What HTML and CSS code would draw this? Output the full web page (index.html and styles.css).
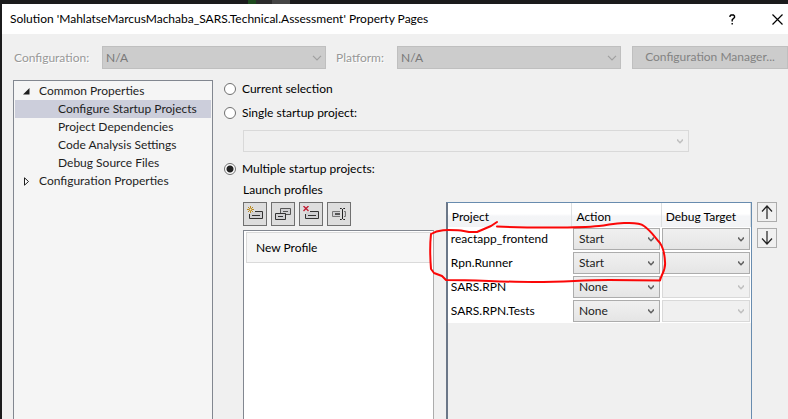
FILE: index.html
```html
<!DOCTYPE html>
<html lang="en">
<head>
<meta charset="utf-8">
<title>Property Pages</title>
<link rel="stylesheet" href="styles.css">
</head>
<body>
<svg class="defs" aria-hidden="true">
  <symbol id="chevron" viewBox="0 0 10 6"><path d="M1 .8 5 4.8 9 .8" fill="none" stroke="currentColor" stroke-width="1.2"/></symbol>
  <symbol id="caret" viewBox="0 0 6 5"><path d="M.6 .3V1.300L3 3.800 5.400 1.300V.3" fill="none" stroke="currentColor" stroke-width="1.4"/></symbol>
</svg>
<div class="dialog">
  <header class="titlebar">
    <h1>Solution 'MahlatseMarcusMachaba_SARS.Technical.Assessment' Property Pages</h1>
    <button class="caption" aria-label="Help"><svg width="7" height="11" viewBox="0 0 7 11" fill="none" stroke="#000" stroke-width="1.4"><path d="M1 3V2L2 1H4.5L5.5 2V3.5L3.2 5.8V7.5M3.2 9V10.6"/></svg></button>
    <button class="caption" aria-label="Close"><svg width="11" height="11" viewBox="0 0 11 11" stroke="#000" stroke-width="1.2"><path d="M.5.5 10.5 10.5M10.5.5.5 10.5"/></svg></button>
  </header>

  <div class="config">
    <label class="config-label" for="cfg">Configuration:</label>
    <span class="combo grey"><select id="cfg" disabled><option>N/A</option></select><svg class="chevron"><use href="#chevron"/></svg></span>
    <label class="platform-label" for="plat">Platform:</label>
    <span class="combo grey"><select id="plat" disabled><option>N/A</option></select><svg class="chevron"><use href="#chevron"/></svg></span>
    <button class="manager" disabled>Configuration Manager...</button>
  </div>

  <main class="main">
    <nav class="tree">
      <div class="node"><svg width="7" height="7" viewBox="0 0 7 7"><path d="M6.5 0V6.5H0Z" fill="#1e1e1e"/></svg>Common Properties</div>
      <div class="node child selected">Configure Startup Projects</div>
      <div class="node child">Project Dependencies</div>
      <div class="node child">Code Analysis Settings</div>
      <div class="node child">Debug Source Files</div>
      <div class="node"><svg width="7" height="9" viewBox="0 0 7 9"><path d="M1.500.8V8.2L5.5 4.5Z" fill="#fff" stroke="#1e1e1e"/></svg>Configuration Properties</div>
    </nav>

    <section class="pane">
      <label class="choice"><input type="radio" name="startup">Current selection</label>
      <label class="choice"><input type="radio" name="startup">Single startup project:</label>
      <span class="combo single"><select aria-label="Single startup project" disabled><option></option></select><svg class="caret"><use href="#caret"/></svg></span>
      <label class="choice multiple"><input type="radio" name="startup" checked>Multiple startup projects:</label>

      <div class="profiles">
        <h2>Launch profiles</h2>
        <div class="columns">
          <div class="launch">
            <div class="tools">
              <button aria-label="Add profile"><svg width="16" height="16" viewBox="0 0 16 16" fill="none"><path d="M3 6H15V12H3Z" fill="#d0d0d2"/><path d="M8 5.5H15.5V12.5H2.5V8M5 9.500H13" stroke="#333"/><path d="M3.500 0V7M0 3.500H7M1 1 6 6M6 1 1 6" stroke="#b98a22"/><circle cx="3.500" cy="3.500" r="1" fill="#f4e6c4"/></svg></button>
              <button aria-label="Duplicate profile"><svg width="16" height="16" viewBox="0 0 16 16" stroke="#333" fill="#d0d0d2"><path d="M5.5 7.500V2.5H15.5V8.5H10.500V7.500Z" stroke="#555"/><path d="M8 5.500H13" stroke="#555"/><path d="M.5 7.5H10.5V13.5H.5Z"/><path d="M3 10.5H8"/></svg></button>
              <button aria-label="Delete profile"><svg width="16" height="16" viewBox="0 0 16 16" fill="none"><path d="M3 6H15V12H3Z" fill="#d0d0d2"/><path d="M7 5.5H15.5V12.5H2.5V8M5 9.500H13" stroke="#333"/><path d="M.5 0 5.5 5M5.5 0 .5 5" stroke="#c01f35" stroke-width="1.4"/></svg></button>
              <button aria-label="Rename profile"><svg width="16" height="16" viewBox="0 0 16 16" fill="none"><path d="M9 5.5H1.5V10.5H9M13 5.5H14.5V10.5H13" stroke="#777" fill="#d0d0d2"/><path d="M4 8H9" stroke="#555" stroke-width="2"/><path d="M9 2.5H10.5L11.5 3.5 12.5 2.5H14M9 13.5H10.5L11.5 12.5 12.5 13.5H14M11.5 3V13" stroke="#222"/></svg></button>
            </div>
            <ul class="list"><li>New Profile</li></ul>
          </div>

          <div class="projects">
            <table>
              <thead><tr><th class="name">Project</th><th>Action</th><th>Debug Target</th></tr></thead>
              <tbody>
                <tr><td>reactapp_frontend</td>
                  <td><span class="combo"><select aria-label="Action"><option>Start</option></select><svg class="caret"><use href="#caret"/></svg></span></td>
                  <td><span class="combo"><select aria-label="Debug target"><option></option></select><svg class="caret"><use href="#caret"/></svg></span></td></tr>
                <tr><td>Rpn.Runner</td>
                  <td><span class="combo"><select aria-label="Action"><option>Start</option></select><svg class="caret"><use href="#caret"/></svg></span></td>
                  <td><span class="combo"><select aria-label="Debug target"><option></option></select><svg class="caret"><use href="#caret"/></svg></span></td></tr>
                <tr><td>SARS.RPN</td>
                  <td><span class="combo"><select aria-label="Action"><option>None</option></select><svg class="caret"><use href="#caret"/></svg></span></td>
                  <td><span class="combo"><select aria-label="Debug target" disabled><option></option></select><svg class="caret"><use href="#caret"/></svg></span></td></tr>
                <tr><td>SARS.RPN.Tests</td>
                  <td><span class="combo"><select aria-label="Action"><option>None</option></select><svg class="caret"><use href="#caret"/></svg></span></td>
                  <td><span class="combo"><select aria-label="Debug target" disabled><option></option></select><svg class="caret"><use href="#caret"/></svg></span></td></tr>
              </tbody>
            </table>
            <svg class="marker" width="246" height="70" viewBox="425 217 246 70" fill="none" stroke="#fb0707" stroke-width="2" stroke-linecap="round" stroke-linejoin="round"><path d="M498 222L492 226 485 229 478 232H470L462 230.500C450 230 440 229 432 234C431 243 431 256 432 269L435 273L443 276L447 280C480 280 500 282 535 282C570 282 580 280 610 280L661 280.500C662 275 667 270 666 262C665.500 250 663 246 661 243C654 235 652 231 645 226C640 222 631 223 625 223C615 223 610 225 600 226C580 228 530 228 498 226.500"/></svg>
          </div>

          <div class="order">
            <button aria-label="Move up"><svg width="12" height="14" viewBox="0 0 12 14" fill="none" stroke="#222" stroke-width="1.2"><path d="M6 1V14M1 6.500 6 1 11 6.500"/></svg></button>
            <button aria-label="Move down"><svg width="12" height="14" viewBox="0 0 12 14" fill="none" stroke="#222" stroke-width="1.2"><path d="M6 0V13M1 7.500 6 13 11 7.500"/></svg></button>
          </div>
        </div>
      </div>
    </section>
  </main>
</div>
</body>
</html>
```
FILE: styles.css
```css
* { box-sizing: border-box; }

body {
  margin: 0;
  height: 100vh;
  overflow: hidden;
  padding: 4px 0 0 2px;
  background: linear-gradient(90deg, #1b1b1c 248px, #1e4a1e 248px 256px, #2b2b2b 256px 272px, #454545 272px 290px, #1b1b1c 290px);
  font: 12px/18px Lato, "Open Sans", sans-serif;
  color: #1e1e1e;
}

button, select, input { margin: 0; font: inherit; color: inherit; }
button { display: flex; align-items: center; justify-content: center; padding: 0; }
h1, h2, ul { margin: 0; padding: 0; font: inherit; }
.defs { display: none; }

.dialog { height: 100%; display: flex; flex-direction: column; background: #f0f0f0; }

.titlebar { display: flex; align-items: center; height: 30px; flex: none; padding-left: 8px; background: #fff; color: #000; }
.titlebar h1 { flex: 1; white-space: nowrap; }
.caption { width: 45px; height: 28px; border: 0; background: none; }
.caption + .caption { margin-right: -12px; }

.config { display: flex; align-items: center; flex: none; padding: 12px 0 11px 12px; color: #989898; text-shadow: 1px 1px #fff; }
.config-label { width: 88px; }
.platform-label { width: 61px; margin-left: 10px; }
.config .combo { flex: 1; }
.manager { width: 156px; height: 23px; margin: -1px 0 0 11px; border: 1px solid #bfbfbf; background: #ccc; color: #838383; white-space: nowrap; text-shadow: none; }

/* A select and its arrow share one grid cell */
.combo { display: grid; align-items: center; color: #222; text-shadow: none; }
.combo select, .combo svg { grid-area: 1 / 1; }
.combo select {
  width: 100%;
  height: 22px;
  padding: 0 5px;
  appearance: none;
  border: 1px solid #acacac;
  border-radius: 0;
  background: linear-gradient(#f0f0f0, #e5e5e5);
  opacity: 1;
}
.combo svg { justify-self: end; pointer-events: none; }
.caret { width: 6px; height: 5px; margin-right: 6px; color: #606060; }
.chevron { width: 10px; height: 6px; margin-right: 4px; color: #a0a0a0; }
.combo.grey select { height: 23px; padding: 0 3px; color: #787878; }
.combo select:disabled { border-color: #d9d9d9; background: #f0f0f0; }
.combo.grey select:disabled { border-color: #bfbfbf; background: #ccc; }
.combo select:disabled + .caret { color: #bfbfbf; }

.main { flex: 1; min-height: 0; display: grid; grid-template-columns: 200px minmax(0, 1fr); gap: 11px; padding: 0 11px; }

.tree { padding: 1px; border: 1px solid #828790; border-bottom: 0; background: #f5f5f5; white-space: nowrap; }
.node { display: flex; align-items: center; height: 18px; padding-left: 8px; gap: 9px; }
.child { padding-left: 43px; }
.selected { background: #cccedb; }

.pane { min-width: 0; display: flex; flex-direction: column; color: #000; }
.choice { display: flex; align-items: center; gap: 6px; height: 18px; flex: none; }
.choice + .choice { margin-top: 6px; }
.choice input { width: 12px; height: 12px; appearance: none; border: 1px solid #707070; border-radius: 50%; background: #fff; }
.choice input:checked { background: radial-gradient(circle, #212121 3px, #fff 4px); }
.single { margin: 8px 88px 0 19px; }
.multiple { margin-top: 8px; }

.profiles { flex: 1; min-height: 0; display: flex; flex-direction: column; padding-left: 19px; }
.profiles h2 { height: 24px; padding-top: 3px; }
.columns { flex: 1; min-height: 0; display: flex; }
.launch { flex: 192; min-width: 0; display: flex; flex-direction: column; margin-right: 12px; }
.tools { display: flex; gap: 4px; }
.tools button { width: 24px; height: 24px; border: 1px solid #707070; background: #ddd; }
.list { flex: 1; margin-top: 4px; padding: 1px 2px; border: 1px solid #828790; border-right-color: #acacac; border-bottom: 0; background: #fff; list-style: none; }
.list li { display: flex; align-items: center; height: 31px; padding-left: 9px; border: 1px solid #dadada; background: #f6f6f6; }

.projects { position: relative; flex: 305; min-width: 0; border: 1px solid #688caf; border-left: 2px solid #6b7788; border-bottom: 0; }
.projects table { width: 100%; table-layout: fixed; border-collapse: collapse; background: #fff; }
.projects th { height: 24px; padding: 3px 4px 0; border-right: 1px solid #dcdfe1; background: linear-gradient(#fff 45%, #f4f5f7 55%, #f2f3f5); font-weight: 400; text-align: left; white-space: nowrap; }
.projects th.name { width: 41%; }
.projects td { height: 24px; padding: 0 1px; }
.projects td:first-child { padding-left: 3px; }
.marker { position: absolute; left: -24px; top: 14px; pointer-events: none; }

.order { display: flex; flex-direction: column; gap: 6px; margin-left: 5px; }
.order button { width: 20px; height: 20px; border: 1px solid #acacac; background: #f0f0f0; }
```
